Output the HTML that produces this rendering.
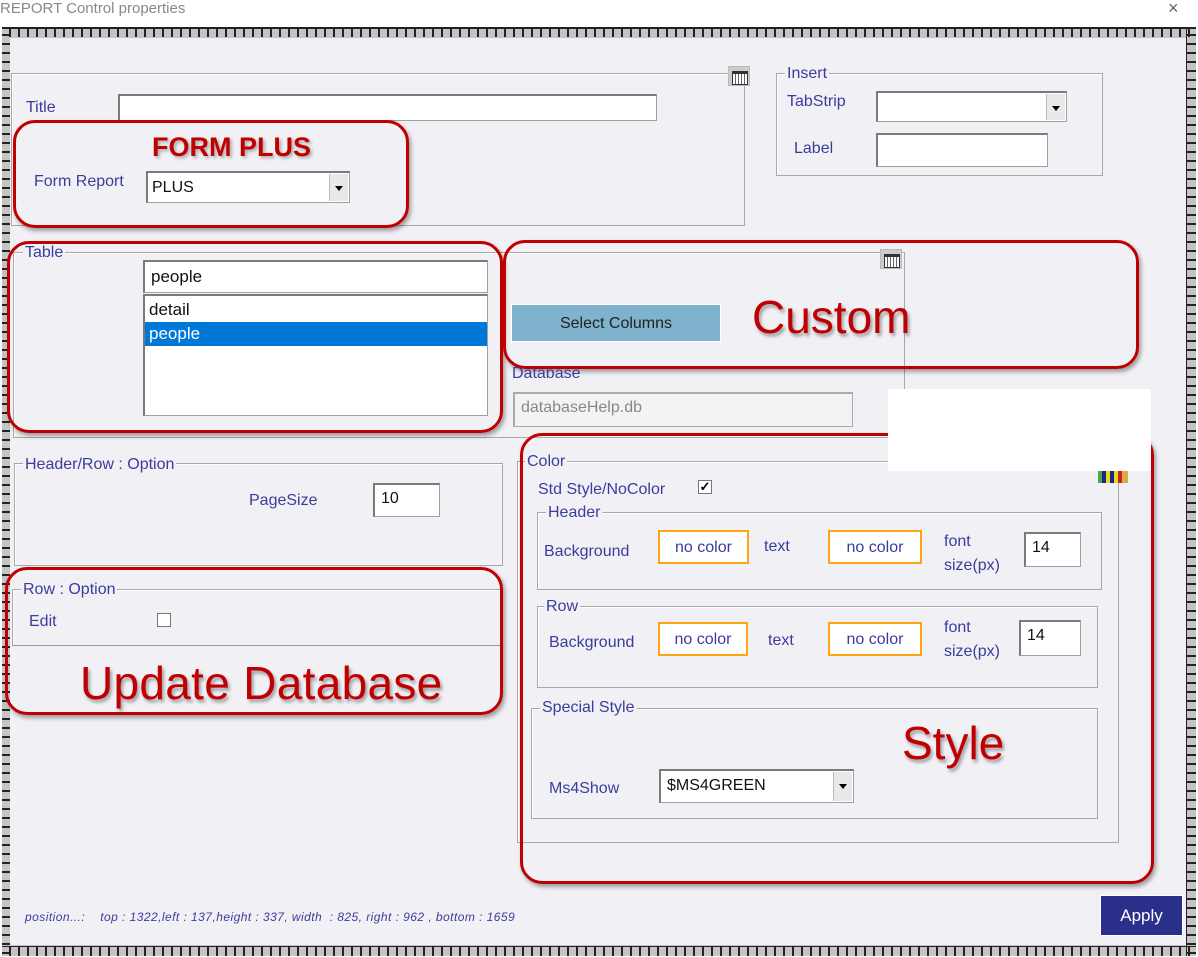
<!DOCTYPE html>
<html><head><meta charset="utf-8"><style>
*{margin:0;padding:0;box-sizing:border-box}
body{width:1198px;height:957px;background:#fff;position:relative;overflow:hidden;font-family:"Liberation Sans",Arial,sans-serif}
.a{position:absolute}
.lab{position:absolute;color:#3c3c9c;font-size:16px;white-space:nowrap;margin-top:2px}
.grp{position:absolute;border:1px solid #a8a8a8;box-shadow:inset 1px 1px 0 #fff}
.leg{position:absolute;background:#f0f0f5;color:#3c3c9c;font-size:16px;padding:0 2px;white-space:nowrap;margin-top:1px}
.inp{position:absolute;background:#fff;border:1px solid #a0a0a0;border-top:2px solid #7a7a7a;border-left:2px solid #7a7a7a;font-size:16px;color:#111;padding:5px 6px 4px}
.red{position:absolute;border:3px solid #c00000;border-radius:22px;box-shadow:2px 3px 4px rgba(0,0,0,.35)}
.big{position:absolute;color:#c00000;font-size:46px;white-space:nowrap;text-shadow:2px 3px 3px rgba(0,0,0,.35)}
.nc{position:absolute;background:#fff;border:2px solid #ffa514;color:#3c3c9c;font-size:16px;text-align:center;line-height:31px}
.dd{position:absolute;right:1px;top:1px;bottom:1px;width:19px;background:#e8e8e8;border-left:1px solid #bbb}
.dd:after{content:"";position:absolute;left:5px;top:12px;border:4px solid transparent;border-top:5px solid #000}
.cb{position:absolute;width:14px;height:14px;background:#fff;border:1px solid #777}
.ico{position:absolute;width:22px;height:20px;background:#ccc;border:1px solid #bbb}
.ico:after{content:"";position:absolute;left:3px;top:4px;width:14px;height:10px;border:1px solid #333;border-top:3px solid #333;background:repeating-linear-gradient(90deg,#fff 0 2px,#666 2px 3px)}
</style></head><body>
<div class="a" style="left:0;top:0;width:1198px;height:24px;background:#fff"></div>
<div class="a" style="left:0;top:0;font-size:15px;color:#888;white-space:nowrap">REPORT Control properties</div>
<div class="a" style="left:1168px;top:-2px;font-size:18px;color:#666">×</div>
<!-- frame -->
<div class="a" style="left:2px;top:27px;width:1194px;height:929px;background:#c4c4c4;border-top:2px solid #222;"></div>
<div class="a" style="left:2px;top:27px;width:1194px;height:10px;background:repeating-linear-gradient(90deg,transparent 0 7px,#222 7px 9px);"></div>
<div class="a" style="left:2px;top:946px;width:1194px;height:10px;background:repeating-linear-gradient(90deg,transparent 0 7px,#222 7px 9px);border-top:1px solid #222"></div>
<div class="a" style="left:2px;top:27px;width:8px;height:929px;background:repeating-linear-gradient(180deg,transparent 0 7px,#222 7px 9px);"></div>
<div class="a" style="left:1186px;top:27px;width:10px;height:929px;background:repeating-linear-gradient(180deg,transparent 0 7px,#222 7px 9px);border-left:1px solid #222"></div>
<div class="a" style="left:10px;top:38px;width:1176px;height:907px;background:#f0f0f5"></div>

<!-- Title group -->
<div class="grp" style="left:11px;top:73px;width:734px;height:153px"></div>
<div class="ico" style="left:728px;top:66px"></div>
<div class="lab" style="left:26px;top:97px">Title</div>
<div class="inp" style="left:118px;top:94px;width:539px;height:27px"></div>
<div class="red" style="left:13px;top:120px;width:396px;height:108px"></div>
<div class="a" style="left:152px;top:132px;font-size:27px;font-weight:bold;color:#c00000;text-shadow:2px 2px 3px rgba(0,0,0,.3)">FORM PLUS</div>
<div class="lab" style="left:34px;top:171px">Form Report</div>
<div class="inp" style="left:146px;top:171px;width:204px;height:32px;padding:6px 4px">PLUS<div class="dd"></div></div>

<!-- Insert -->
<div class="grp" style="left:776px;top:73px;width:327px;height:103px"></div>
<div class="leg" style="left:785px;top:64px">Insert</div>
<div class="lab" style="left:787px;top:91px">TabStrip</div>
<div class="inp" style="left:876px;top:91px;width:191px;height:31px"><div class="dd"></div></div>
<div class="lab" style="left:794px;top:138px">Label</div>
<div class="inp" style="left:876px;top:133px;width:172px;height:34px"></div>

<!-- Table -->
<div class="grp" style="left:13px;top:252px;width:892px;height:186px"></div>
<div class="leg" style="left:23px;top:243px">Table</div>
<div class="inp" style="left:143px;top:260px;width:345px;height:33px;font-size:17px">people</div>
<div class="inp" style="left:143px;top:294px;width:345px;height:122px;padding:2px 0">
 <div style="padding:2px 4px 0;height:24px;font-size:17px">detail</div>
 <div style="padding:2px 4px 0;height:24px;font-size:17px;background:#0078d7;color:#fff">people</div>
</div>
<div class="red" style="left:7px;top:241px;width:496px;height:192px"></div>
<div class="ico" style="left:880px;top:249px"></div>
<div class="a" style="left:511px;top:304px;width:210px;height:38px;background:#7fb2cc;border:1px solid #fff;color:#222;font-size:16px;text-align:center;line-height:37px">Select Columns</div>
<div class="red" style="left:503px;top:240px;width:636px;height:129px"></div>
<div class="big" style="left:752px;top:290px">Custom</div>
<div class="lab" style="left:512px;top:363px">Database</div>
<div class="inp" style="left:513px;top:392px;width:340px;height:35px;color:#888;background:#f3f3f3;border-color:#aaa">databaseHelp.db</div>

<!-- Header/Row -->
<div class="grp" style="left:14px;top:463px;width:489px;height:103px"></div>
<div class="leg" style="left:23px;top:455px">Header/Row : Option</div>
<div class="lab" style="left:249px;top:490px">PageSize</div>
<div class="inp" style="left:373px;top:483px;width:67px;height:34px">10</div>

<!-- Row option -->
<div class="grp" style="left:12px;top:589px;width:491px;height:57px;border-bottom:1px solid #999"></div>
<div class="leg" style="left:21px;top:580px">Row : Option</div>
<div class="lab" style="left:29px;top:611px">Edit</div>
<div class="cb" style="left:157px;top:613px"></div>
<div class="red" style="left:5px;top:567px;width:498px;height:148px"></div>
<div class="big" style="left:80px;top:656px;letter-spacing:0.3px">Update Database</div>

<!-- Color -->
<div class="grp" style="left:517px;top:461px;width:602px;height:382px"></div>
<div class="leg" style="left:525px;top:452px">Color</div>
<div class="lab" style="left:538px;top:479px">Std Style/NoColor</div>
<div class="cb" style="left:698px;top:480px;font-size:13px;line-height:11px;text-align:center;font-weight:bold">✓</div>
<div class="grp" style="left:537px;top:512px;width:565px;height:78px"></div>
<div class="leg" style="left:546px;top:503px">Header</div>
<div class="lab" style="left:544px;top:541px">Background</div>
<div class="nc" style="left:658px;top:530px;width:91px;height:34px">no color</div>
<div class="lab" style="left:764px;top:536px">text</div>
<div class="nc" style="left:828px;top:530px;width:94px;height:34px">no color</div>
<div class="lab" style="left:944px;top:528px;line-height:24px">font<br>size(px)</div>
<div class="inp" style="left:1024px;top:532px;width:57px;height:35px">14</div>

<div class="grp" style="left:537px;top:606px;width:561px;height:82px"></div>
<div class="leg" style="left:544px;top:597px">Row</div>
<div class="lab" style="left:549px;top:632px">Background</div>
<div class="nc" style="left:658px;top:622px;width:90px;height:34px">no color</div>
<div class="lab" style="left:768px;top:630px">text</div>
<div class="nc" style="left:828px;top:622px;width:94px;height:34px">no color</div>
<div class="lab" style="left:944px;top:614px;line-height:24px">font<br>size(px)</div>
<div class="inp" style="left:1019px;top:620px;width:62px;height:36px">14</div>

<div class="grp" style="left:531px;top:708px;width:567px;height:111px"></div>
<div class="leg" style="left:540px;top:698px">Special Style</div>
<div class="lab" style="left:549px;top:778px">Ms4Show</div>
<div class="inp" style="left:659px;top:769px;width:195px;height:34px;padding:6px 6px">$MS4GREEN<div class="dd"></div></div>

<div class="red" style="left:520px;top:433px;width:634px;height:451px"></div>
<div class="big" style="left:902px;top:716px">Style</div>
<div class="a" style="left:888px;top:389px;width:263px;height:82px;background:#fff"></div>
<div class="a" style="left:1098px;top:471px;width:30px;height:12px;background:linear-gradient(90deg,#4a4 0 4px,#228 4px 8px,#dd2 8px 12px,#228 12px 16px,#dd2 16px 20px,#c22 20px 24px,#da4 24px 30px)"></div>

<div class="a" style="left:25px;top:910px;font-size:12px;font-style:italic;color:#3c3c9c;white-space:pre;letter-spacing:0.45px">position...:    top : 1322,left : 137,height : 337, width  : 825, right : 962 , bottom : 1659</div>
<div class="a" style="left:1100px;top:895px;width:83px;height:41px;background:#2b2f8c;border:1px solid #fff;color:#fff;font-size:17px;text-align:center;line-height:39px">Apply</div>
</body></html>
